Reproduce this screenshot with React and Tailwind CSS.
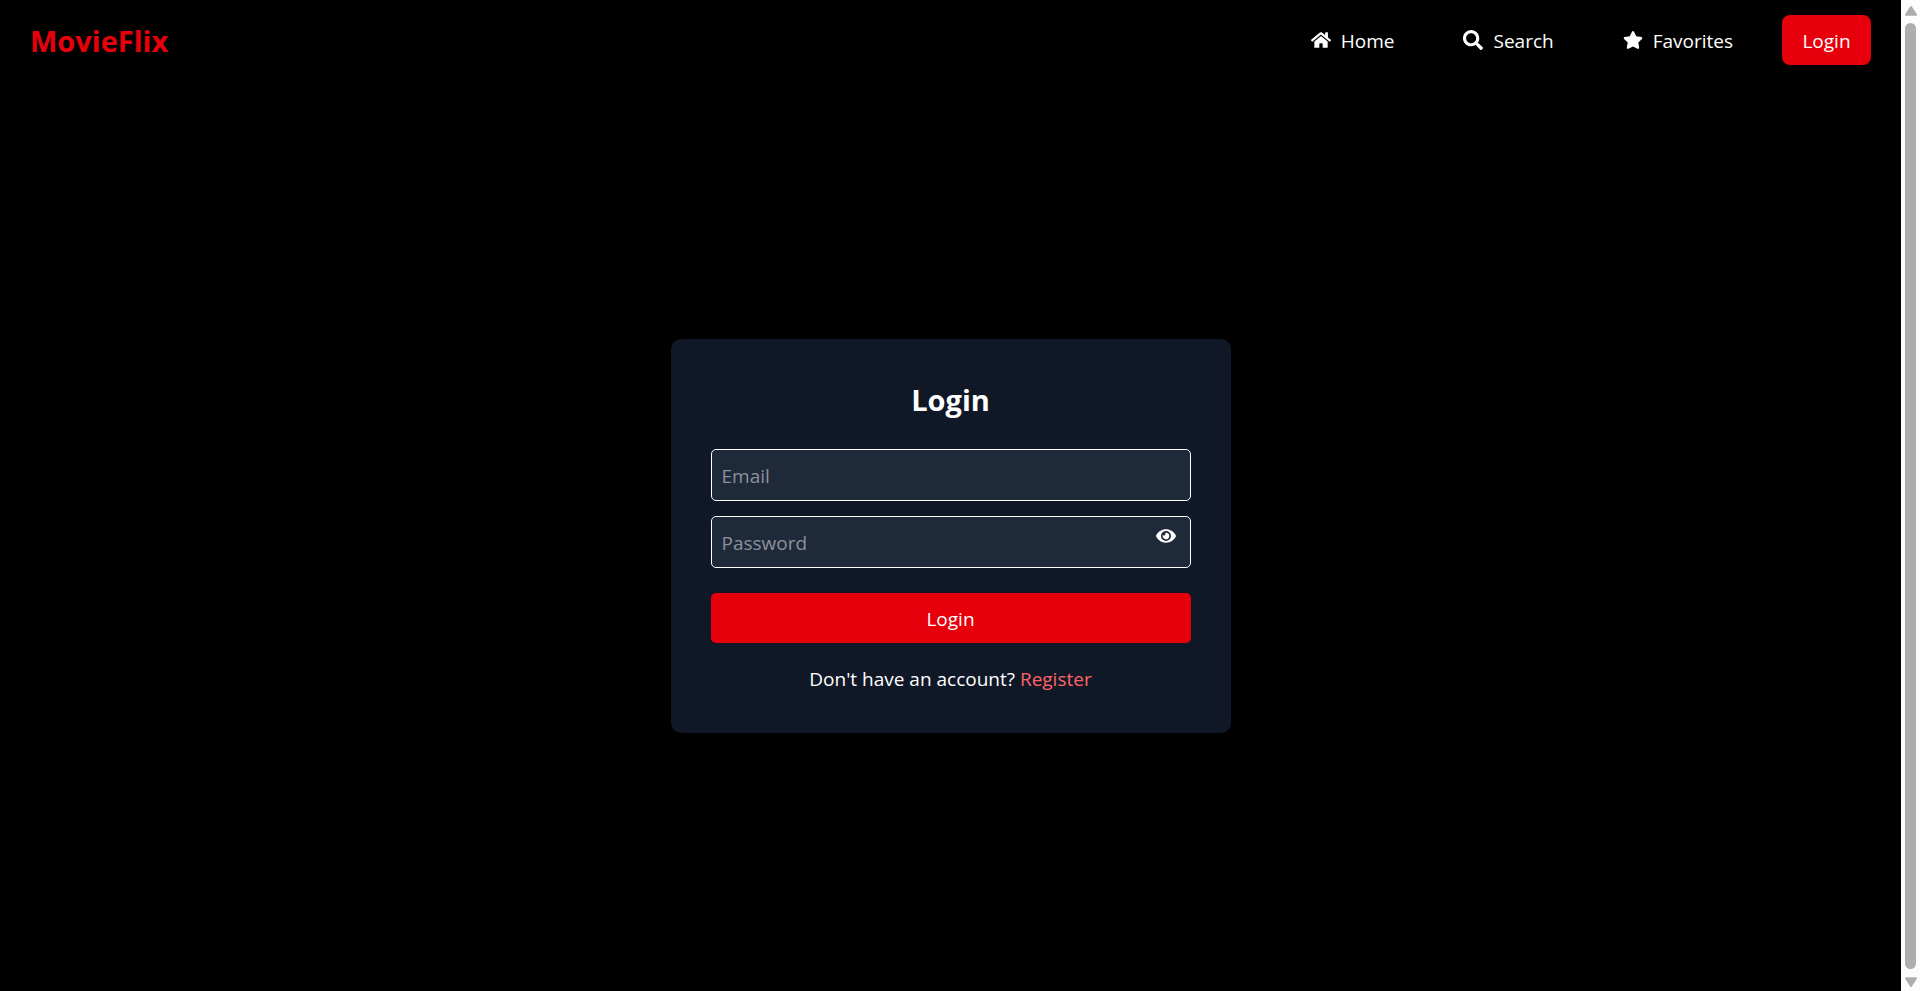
import { useState } from "react";
import { FaEye, FaEyeSlash, FaHome, FaSearch, FaStar } from "react-icons/fa";

const NAV_LINKS = [
  { label: "Home", href: "#home", Icon: FaHome },
  { label: "Search", href: "#search", Icon: FaSearch },
  { label: "Favorites", href: "#favorites", Icon: FaStar },
];

function Navbar() {
  return (
    <nav className="flex items-center justify-between bg-black px-[30px] py-[15px]">
      <a href="#home" className="pt-[2px] text-[29px] leading-[40px] font-bold text-[#e7000b]">
        MovieFlix
      </a>
      <div className="flex items-center gap-[29px]">
        {NAV_LINKS.map(({ label, href, Icon }) => (
          <a key={label} href={href} className="flex items-center gap-[10px] px-5 py-[10px]">
            <Icon className="size-5" aria-hidden="true" />
            <span className="pt-[2px] leading-[28px]">{label}</span>
          </a>
        ))}
        <a href="#login" className="min-w-[89px] rounded-lg bg-[#e7000b] px-5 pt-[11px] pb-[9px] text-center">
          Login
        </a>
      </div>
    </nav>
  );
}

const FIELD =
  "block h-[52px] w-full rounded-[5px] border border-white bg-[#1e2939] px-[10px] pt-[2px] text-white placeholder:text-[#8d9299] focus:outline-none";

function LoginForm() {
  const [visible, setVisible] = useState(false);
  const Eye = visible ? FaEyeSlash : FaEye;

  return (
    <form
      onSubmit={(event) => event.preventDefault()}
      className="w-full max-w-[560px] rounded-[10px] bg-[#101828] px-10 pt-[41px] pb-[39px]"
    >
      <h1 className="mb-[29px] text-center text-[29px] leading-[40px] font-bold">Login</h1>
      <input type="email" aria-label="Email" placeholder="Email" className={FIELD} />
      <div className="relative mt-[15px]">
        <input
          type={visible ? "text" : "password"}
          aria-label="Password"
          placeholder="Password"
          className={FIELD}
        />
        <button
          type="button"
          aria-label="Toggle password visibility"
          onClick={() => setVisible(!visible)}
          className="absolute top-[10px] right-[15px]"
        >
          <Eye className="size-5" />
        </button>
      </div>
      <button
        type="submit"
        className="mt-[25px] block w-full rounded-[5px] bg-[#e7000b] pt-[11px] pb-[9px]"
      >
        Login
      </button>
      <p className="mt-[21px] text-center">
        Don't have an account?{" "}
        <a href="#register" className="text-[#ff6467]">
          Register
        </a>
      </p>
    </form>
  );
}

function ScrollRail() {
  return (
    <div
      aria-hidden="true"
      className="flex w-[19px] shrink-0 flex-col items-center bg-[#fcfcfc] pt-[6px] pb-1"
    >
      <svg viewBox="0 0 12 10" className="h-[10px] w-3" fill="#adadad">
        <path d="M5.2.6a1 1 0 0 1 1.6 0l5 7.6A1.1 1.1 0 0 1 10.900 9.800H1.100A1.100 1.100 0 0 1 .2 8.200Z" />
      </svg>
      <div className="mt-[7px] mb-2 w-[11px] grow rounded-full bg-[#adadad]" />
      <svg viewBox="0 0 12 10" className="h-[10px] w-3" fill="#adadad">
        <path d="M5.200 9.400a1 1 0 0 0 1.600 0l5-7.600A1.100 1.100 0 0 0 10.900.2H1.100A1.100 1.100 0 0 0 .2 1.800Z" />
      </svg>
    </div>
  );
}

export default function App() {
  return (
    <div className="flex min-h-screen bg-black font-['Open_Sans','Noto_Sans',sans-serif] text-[19px] leading-[30px] text-white">
      <div className="flex grow flex-col">
        <Navbar />
        <main className="flex grow items-center justify-center pt-px">
          <LoginForm />
        </main>
      </div>
      <ScrollRail />
    </div>
  );
}
